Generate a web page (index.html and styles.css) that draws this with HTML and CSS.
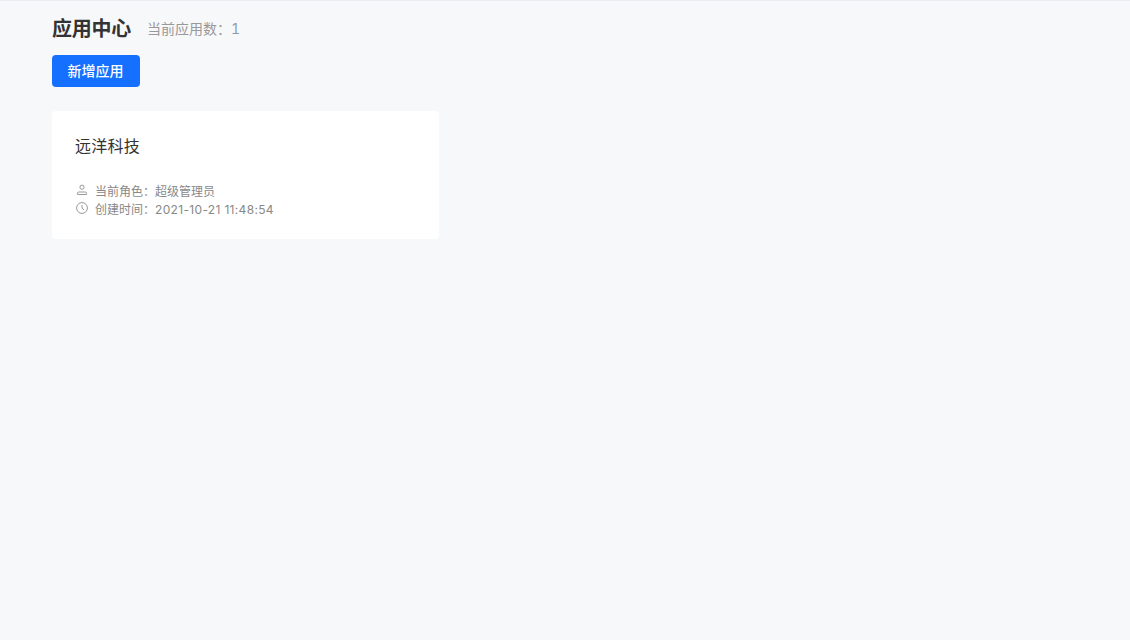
FILE: index.html
```html
<!DOCTYPE html>
<html lang="zh-CN">
<head>
  <meta charset="UTF-8" />
  <meta name="viewport" content="width=device-width, initial-scale=1.0"/>
  <title>应用中心</title>
  <link rel="stylesheet" href="styles.css">
</head>

<body>
  <div class="container">
    <div class="page-head">
      <h2>应用中心</h2>
      <span class="app-count">当前应用数：<span class="count-num">1</span></span>
    </div>

    <button class="add-btn" type="button">新增应用</button>

    <div class="app-card">
      <h3>远洋科技</h3>
      <div class="meta-row">
        <svg class="meta-icon" viewBox="0 0 12 12" fill="none" stroke="currentColor" stroke-width="1">
          <circle cx="6" cy="3.2" r="2.1"/>
          <path d="M1.5 10.5V9.2c0-.7.5-1.2 1.2-1.2h6.6c.7 0 1.2.5 1.2 1.2v1.3z"/>
        </svg>
        <span>当前角色：超级管理员</span>
      </div>
      <div class="meta-row">
        <svg class="meta-icon" viewBox="0 0 12 12" fill="none" stroke="currentColor" stroke-width="1">
          <circle cx="6" cy="6" r="5.4"/>
          <path d="M6 3v3.2l2 1.6"/>
        </svg>
        <span>创建时间：<span class="stamp">2021-10-21 11:48:54</span></span>
      </div>
    </div>
  </div>
</body>
</html>
```

FILE: styles.css
```css
* {
  box-sizing: border-box;
}
body {
  margin: 0;
  min-height: 640px;
  background: #f7f8fa;
  border-top: 1px solid #ebedf0;
  font-family: "Inter", "Noto Sans CJK SC", sans-serif;
}
.container {
  padding: 0 52px;
}
.page-head {
  display: flex;
  align-items: center;
  height: 54px;
  padding-bottom: 1px;
}
h2 {
  margin: 0 16px 0 0;
  font-size: 20px;
  font-weight: bold;
  color: #333;
  letter-spacing: -0.25px;
}
.app-count {
  font-size: 14px;
  color: #999;
}
.count-num {
  color: #8c9bab;
  font-variant-numeric: tabular-nums;
}
.add-btn {
  display: block;
  width: 88px;
  height: 32px;
  padding: 0 1px 2px 0;
  background-color: #1570ff;
  color: #fff;
  border: none;
  border-radius: 4px;
  font-family: inherit;
  font-size: 14px;
  font-weight: 500;
  cursor: pointer;
}
.app-card {
  width: 387px;
  height: 128px;
  margin-top: 24px;
  padding: 23px 23px;
  background: #fff;
  border-radius: 4px;
}
h3 {
  margin: 0 0 23px;
  font-size: 16px;
  line-height: 24px;
  font-weight: normal;
  color: #333;
  letter-spacing: 0.25px;
}
.meta-row {
  display: flex;
  align-items: center;
  height: 18px;
  font-size: 12px;
  color: #888;
}
.stamp {
  letter-spacing: 0.33px;
}
.meta-icon {
  width: 12px;
  height: 12px;
  margin: 0 7px 0 1px;
  color: #999;
}
```
